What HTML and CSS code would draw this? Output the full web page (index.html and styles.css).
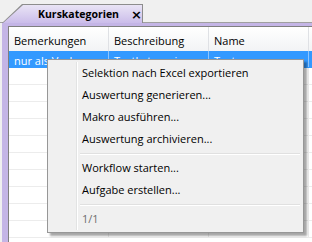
FILE: index.html
```html
<!DOCTYPE html>
<html lang="de">
<head>
  <meta charset="UTF-8" />
  <meta name="viewport" content="width=device-width, initial-scale=1.0"/>
  <title>Kurskategorien</title>
  <link rel="stylesheet" href="styles.css">
</head>
<body>
  <div class="tabstrip">
    <div class="tab">
      <div class="tabInner">
        <span class="tabTitle">Kurskategorien</span>
        <span class="tabClose">×</span>
      </div>
    </div>
  </div>

  <div class="frame">
    <div class="panel">
      <div class="gridHead">
        <div class="cell">Bemerkungen</div>
        <div class="cell">Beschreibung</div>
        <div class="cell">Name</div>
      </div>
      <div class="row selected">
        <div class="cell">nur als Vorlage</div>
        <div class="cell">Testkategorie</div>
        <div class="cell">Test</div>
      </div>
      <div class="row"><div class="cell"></div><div class="cell"></div><div class="cell"></div></div>
      <div class="row"><div class="cell"></div><div class="cell"></div><div class="cell"></div></div>
      <div class="row"><div class="cell"></div><div class="cell"></div><div class="cell"></div></div>
      <div class="row"><div class="cell"></div><div class="cell"></div><div class="cell"></div></div>
      <div class="row"><div class="cell"></div><div class="cell"></div><div class="cell"></div></div>
      <div class="row"><div class="cell"></div><div class="cell"></div><div class="cell"></div></div>
      <div class="row"><div class="cell"></div><div class="cell"></div><div class="cell"></div></div>
      <div class="row"><div class="cell"></div><div class="cell"></div><div class="cell"></div></div>
      <div class="row"><div class="cell"></div><div class="cell"></div><div class="cell"></div></div>
      <div class="row"><div class="cell"></div><div class="cell"></div><div class="cell"></div></div>
    </div>
  </div>

  <div class="menu">
    <div class="gutter"></div>
    <div class="item">Selektion nach Excel exportieren</div>
    <div class="item">Auswertung generieren...</div>
    <div class="item">Makro ausführen...</div>
    <div class="item">Auswertung archivieren...</div>
    <div class="sep"></div>
    <div class="item">Workflow starten...</div>
    <div class="item">Aufgabe erstellen...</div>
    <div class="sep"></div>
    <div class="item disabled">1/1</div>
  </div>
</body>
</html>
```

FILE: styles.css
```css
body {
    margin: 0;
    background-color: #f0f0f0;
    font-family: "Open Sans", "Noto Sans", sans-serif;
    font-size: 11px;
    color: #000;
    overflow: hidden;
    height: 242px;
}

.tabstrip {
    height: 23px;
    box-sizing: border-box;
    border-bottom: 1px solid #a0a0a0;
    padding-top: 4px;
    padding-left: 2px;
}

.tab {
    position: relative;
    z-index: 1;
    width: 141px;
    height: 19px;
    background-color: #8d8d8d;
    clip-path: polygon(20px 0, 100% 0, 100% 100%, 0 100%);
}

.tabInner {
    height: 19px;
    margin: 0 1px 0 1px;
    padding-top: 1px;
    box-sizing: border-box;
    background: linear-gradient(#ebe6f6, #cbbdea);
    clip-path: polygon(20px 1px, 100% 1px, 100% 100%, 0 100%);
    display: flex;
    align-items: center;
}

.tabTitle {
    margin-left: 35px;
    font-weight: bold;
    font-size: 10.5px;
}

.tabClose {
    margin-left: 12px;
    font-family: "DejaVu Sans", sans-serif;
    font-size: 13px;
    font-weight: bold;
    line-height: 1;
}

.frame {
    margin-left: 2px;
    padding: 3px 0 0 6px;
    background-color: #c4b5e6;
    height: 219px;
    box-sizing: border-box;
}

.panel {
    height: 100%;
    background-color: #fff;
    border-left: 1px solid #7f7f7f;
    border-top: 1px solid #7f7f7f;
    overflow: hidden;
}

.gridHead {
    display: flex;
    height: 24px;
    background: linear-gradient(#ffffff, #f2f3f5);
}

.gridHead .cell {
    padding-top: 6px;
    border-right: 1px solid #dfe1e5;
}

.cell {
    width: 100px;
    flex-shrink: 0;
    box-sizing: border-box;
    padding-left: 5px;
    border-right: 1px solid #ececec;
    white-space: nowrap;
    overflow: hidden;
}

.row {
    display: flex;
    height: 17px;
    box-sizing: border-box;
    border-bottom: 1px solid #ececec;
    line-height: 15px;
}

.row .cell {
    padding-top: 2px;
}

.row.selected {
    background-color: #3399ff;
    color: #fff;
    border-bottom-color: #3399ff;
}

.row.selected .cell {
    border-right-color: #8ec5ff;
}

.menu {
    position: absolute;
    left: 47px;
    top: 59px;
    width: 257px;
    height: 174px;
    box-sizing: border-box;
    padding: 2px;
    background-color: #f0f0f0;
    border: 1px solid #979797;
    box-shadow: 3px 3px 2px rgba(0, 0, 0, 0.35);
}

.gutter {
    position: absolute;
    left: 28px;
    top: 2px;
    bottom: 2px;
    width: 1px;
    background-color: #e2e3e3;
    border-right: 1px solid #fff;
}

.item {
    height: 22px;
    line-height: 22px;
    padding-left: 32px;
}

.item.disabled {
    color: #6d6d6d;
}

.sep {
    height: 7px;
    margin-left: 30px;
    margin-right: 1px;
    box-sizing: border-box;
    padding-top: 3px;
}

.sep::before {
    content: "";
    display: block;
    height: 1px;
    background-color: #e0e0e0;
    border-bottom: 1px solid #fff;
}
```
